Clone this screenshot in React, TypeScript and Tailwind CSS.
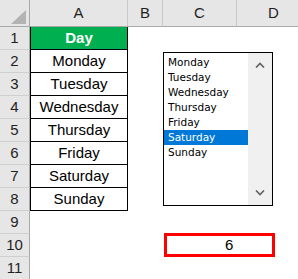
import React from 'react';

const days = ['Monday', 'Tuesday', 'Wednesday', 'Thursday', 'Friday', 'Saturday', 'Sunday'];
const cols = ['A', 'B', 'C', 'D'];

const font = { fontFamily: '"Liberation Sans", Arial, sans-serif' };

const App: React.FC = () => {
  const rows = Array.from({ length: 11 }, (_, i) => i + 1);

  return (
    <div className="w-[298px] h-[279px] overflow-hidden bg-white text-[#1f1f1f]" style={font}>
      <div className="relative grid grid-cols-[30px_98px_35px_74px_74px] grid-rows-[27px_repeat(11,23px)] w-[311px]">
        {/* corner */}
        <div className="relative bg-[#e6e6e6] border-r border-b border-[#a8a8a8]">
          <svg className="absolute left-[11px] top-[10px]" width="15" height="14" viewBox="0 0 15 14">
            <polygon points="15,0 15,14 0,14" fill="#b3b3b3" />
          </svg>
        </div>
        {cols.map((c) => (
          <div
            key={c}
            className="flex items-center justify-center bg-[#e6e6e6] border-b border-b-[#a8a8a8] border-r border-r-[#c8c8c8] text-[15px]"
          >
            {c}
          </div>
        ))}

        {rows.map((r) => (
          <React.Fragment key={r}>
            <div className="flex items-center justify-center bg-[#e6e6e6] border-r border-r-[#a8a8a8] border-b border-b-[#cfcfcf] text-[15px]">
              {r}
            </div>
            {r === 1 && (
              <div className="flex items-center justify-center bg-[#00b050] text-white font-bold text-[15px] border-l border-r border-b border-black">
                Day
              </div>
            )}
            {r > 1 && r <= 8 && (
              <div className="flex items-center justify-center text-black text-[15px] border-l border-r border-b border-black">
                {days[r - 2]}
              </div>
            )}
            {r > 8 && <div />}
            <div />
            <div />
            <div />
          </React.Fragment>
        ))}

        {/* list box control */}
        <div className="absolute left-[163px] top-[52px] w-[110px] h-[154px] border-[1.5px] border-black bg-white flex">
          <div className="flex-1 pt-[2px] text-[11.5px] leading-[15px] text-black" style={{ fontFamily: '"DejaVu Sans", Tahoma, sans-serif', fontSize: '10.5px' }}>
            {days.map((d) => (
              <div key={d} className={d === 'Saturday' ? 'bg-[#0078d7] text-white pl-[4px]' : 'pl-[4px]'}>
                {d}
              </div>
            ))}
          </div>
          <div className="w-[24px] bg-[#f0f0f0] flex flex-col justify-between items-center">
            <div className="h-[24px] w-full flex items-center justify-center">
              <svg width="10" height="6" viewBox="0 0 10 6">
                <polyline points="1,5.5 5,1.5 9,5.5" fill="none" stroke="#606060" strokeWidth="1.6" />
              </svg>
            </div>
            <div className="h-[24px] w-full flex items-center justify-center">
              <svg width="10" height="6" viewBox="0 0 10 6">
                <polyline points="1,0.5 5,4.5 9,0.5" fill="none" stroke="#606060" strokeWidth="1.6" />
              </svg>
            </div>
          </div>
        </div>

        {/* result cell */}
        <div className="absolute left-[164px] top-[233px] w-[111px] h-[24px] border-[3px] border-[#ff0000] flex items-center pl-[58px] text-[15px] text-black">
          6
        </div>
      </div>
    </div>
  );
};

export default App;
